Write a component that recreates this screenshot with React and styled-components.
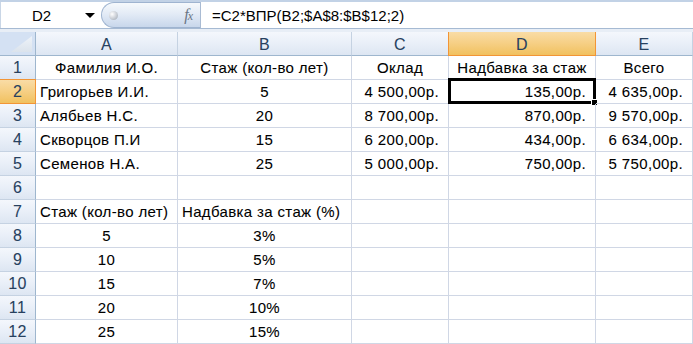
import React from "react";
import styled, { createGlobalStyle, css } from "styled-components";

const Global = createGlobalStyle`
  html, body { margin: 0; padding: 0; background: #fff; }
  body { font-family: "Liberation Sans", Arial, sans-serif; }
  * { box-sizing: border-box; }
`;

const Page = styled.div`
  width: 693px;
  height: 344px;
  overflow: hidden;
  background: #fff;
`;

const FormulaBar = styled.div`
  display: flex;
  align-items: stretch;
  height: 29px;
  border-top: 2px solid #c2d2e6;
  border-bottom: 1px solid #a6bad3;
  background: #fff;
  font-size: 15px;
`;

const Gap = styled.div`
  height: 3px;
  background: #e8eef6;
`;

const NameBox = styled.div`
  position: relative;
  width: 101px;
  display: flex;
  align-items: center;
  padding-left: 31px;
  color: #000;
  border-left: 1px solid #c9d6e6;
`;

const DropArrow = styled.span`
  position: absolute;
  left: 84px;
  top: 11px;
  width: 0;
  height: 0;
  border-left: 5px solid transparent;
  border-right: 5px solid transparent;
  border-top: 5px solid #000;
`;

const Pill = styled.div`
  width: 99px;
  display: flex;
  align-items: center;
  justify-content: space-between;
  padding: 0 8px 0 7px;
  border-radius: 13px 0 0 13px;
  border: 1px solid #9fb4d0;
  border-right: none;
  background: linear-gradient(#f6f9fc 0%, #e3ebf6 45%, #c8d7eb 100%);
`;

const Knob = styled.span`
  width: 9px;
  height: 9px;
  border-radius: 50%;
  background: radial-gradient(circle at 35% 35%, #ffffff 0%, #c8cdd4 55%, #98a1ad 100%);
`;

const Fx = styled.span`
  font-family: "Liberation Serif", "Times New Roman", serif;
  font-style: italic;
  font-size: 16px;
  color: #6b7685;
  letter-spacing: -1px;
  & small { font-size: 12px; }
`;

const Separator = styled.div`
  width: 1px;
  background: #a9bbd3;
`;

const FormulaText = styled.div`
  flex: 1;
  display: flex;
  align-items: center;
  padding-left: 11px;
  color: #000;
  white-space: nowrap;
`;

const Grid = styled.div`
  display: grid;
  grid-template-columns: 36px 142px 174px 97px 147px 97px;
  grid-auto-rows: 24px;
  font-size: 15px;
  letter-spacing: 0.35px;
  -webkit-text-stroke: 0.08px currentColor;
`;

const headerBg = css`
  background: ${(p) =>
    p.$active
      ? "linear-gradient(#f9dca6 0%, #f6cf84 50%, #f1c15f 100%)"
      : "linear-gradient(#f4f7fc 0%, #e9eff8 50%, #dde6f2 100%)"};
  color: #27415f;
  font-size: 16px;
`;

const Corner = styled.div`
  position: relative;
  background: #d4e1f3;
  border-right: 1px solid #9eb6ce;
  border-bottom: 1px solid #9eb6ce;
  & svg { position: absolute; left: 0; top: 0; }
`;

const ColHead = styled.div`
  ${headerBg}
  display: flex;
  align-items: center;
  justify-content: center;
  padding-top: 2px;
  border-right: 1px solid ${(p) => (p.$active ? "#f29536" : "#c5d2e2")};
  border-bottom: 1px solid ${(p) => (p.$active ? "#f29536" : "#9eb6ce")};
  ${(p) => p.$active && "border-left: 1px solid #f29536; margin-left: -1px;"}
`;

const RowHead = styled.div`
  ${headerBg}
  display: flex;
  align-items: flex-end;
  justify-content: center;
  padding-bottom: 2px;
  line-height: 18px;
  border-right: 1px solid ${(p) => (p.$active ? "#f29536" : "#9eb6ce")};
  border-bottom: 1px solid ${(p) => (p.$active ? "#f29536" : "#c5d2e2")};
  ${(p) => p.$active && "border-top: 1px solid #f29536; margin-top: -1px;"}
`;

const Cell = styled.div`
  position: relative;
  display: flex;
  align-items: flex-end;
  justify-content: ${(p) =>
    p.$align === "right" ? "flex-end" : p.$align === "center" ? "center" : "flex-start"};
  padding: 0 ${(p) => (p.$align === "right" ? "9px" : "3px")} 2px
    ${(p) => (p.$align === "left" ? "4px" : "3px")};
  line-height: 18px;
  color: #000;
  white-space: nowrap;
  border-right: 1px solid #d0d7e5;
  border-bottom: 1px solid #d0d7e5;
`;

const Selection = styled.div`
  position: absolute;
  left: -1px;
  top: -2px;
  width: 148px;
  height: 26px;
  border: 3px solid #000;
  pointer-events: none;
`;

const FillHandle = styled.span`
  position: absolute;
  right: -5px;
  bottom: -5px;
  width: 7px;
  height: 7px;
  background: #000;
  border: 1px solid #fff;
`;

const cols = ["A", "B", "C", "D", "E"];

const rows = [
  [["Фамилия И.О.", "center"], ["Стаж (кол-во лет)", "center"], ["Оклад", "center"], ["Надбавка за стаж", "center"], ["Всего", "center"]],
  [["Григорьев И.И.", "left"], ["5", "center"], ["4 500,00р.", "right"], ["135,00р.", "right"], ["4 635,00р.", "right"]],
  [["Алябьев Н.С.", "left"], ["20", "center"], ["8 700,00р.", "right"], ["870,00р.", "right"], ["9 570,00р.", "right"]],
  [["Скворцов П.И", "left"], ["15", "center"], ["6 200,00р.", "right"], ["434,00р.", "right"], ["6 634,00р.", "right"]],
  [["Семенов Н.А.", "left"], ["25", "center"], ["5 000,00р.", "right"], ["750,00р.", "right"], ["5 750,00р.", "right"]],
  [["", "left"], ["", "left"], ["", "left"], ["", "left"], ["", "left"]],
  [["Стаж (кол-во лет)", "left"], ["Надбавка за стаж (%)", "left"], ["", "left"], ["", "left"], ["", "left"]],
  [["5", "center"], ["3%", "center"], ["", "left"], ["", "left"], ["", "left"]],
  [["10", "center"], ["5%", "center"], ["", "left"], ["", "left"], ["", "left"]],
  [["15", "center"], ["7%", "center"], ["", "left"], ["", "left"], ["", "left"]],
  [["20", "center"], ["10%", "center"], ["", "left"], ["", "left"], ["", "left"]],
  [["25", "center"], ["15%", "center"], ["", "left"], ["", "left"], ["", "left"]],
];

export default function App() {
  return (
    <Page>
      <Global />
      <FormulaBar>
        <NameBox>
          D2
          <DropArrow />
        </NameBox>
        <Pill>
          <Knob />
          <Fx>
            f<small>x</small>
          </Fx>
        </Pill>
        <Separator />
        <FormulaText>=C2*ВПР(B2;$A$8:$B$12;2)</FormulaText>
      </FormulaBar>
      <Gap />
      <Grid>
        <Corner>
          <svg width="35" height="23" viewBox="0 0 35 23">
            <defs>
              <linearGradient id="tri" x1="0" y1="0" x2="0" y2="1">
                <stop offset="0" stopColor="#eef3f9" />
                <stop offset="1" stopColor="#dbe3ec" />
              </linearGradient>
            </defs>
            <polygon points="11,20 32,20 32,4" fill="url(#tri)" />
          </svg>
        </Corner>
        {cols.map((c) => (
          <ColHead key={c} $active={c === "D"}>
            {c}
          </ColHead>
        ))}
        {rows.map((r, i) => (
          <React.Fragment key={i}>
            <RowHead $active={i === 1}>{i + 1}</RowHead>
            {r.map(([text, align], j) => (
              <Cell key={j} $align={align}>
                {text}
                {i === 1 && j === 3 && (
                  <Selection>
                    <FillHandle />
                  </Selection>
                )}
              </Cell>
            ))}
          </React.Fragment>
        ))}
      </Grid>
    </Page>
  );
}
